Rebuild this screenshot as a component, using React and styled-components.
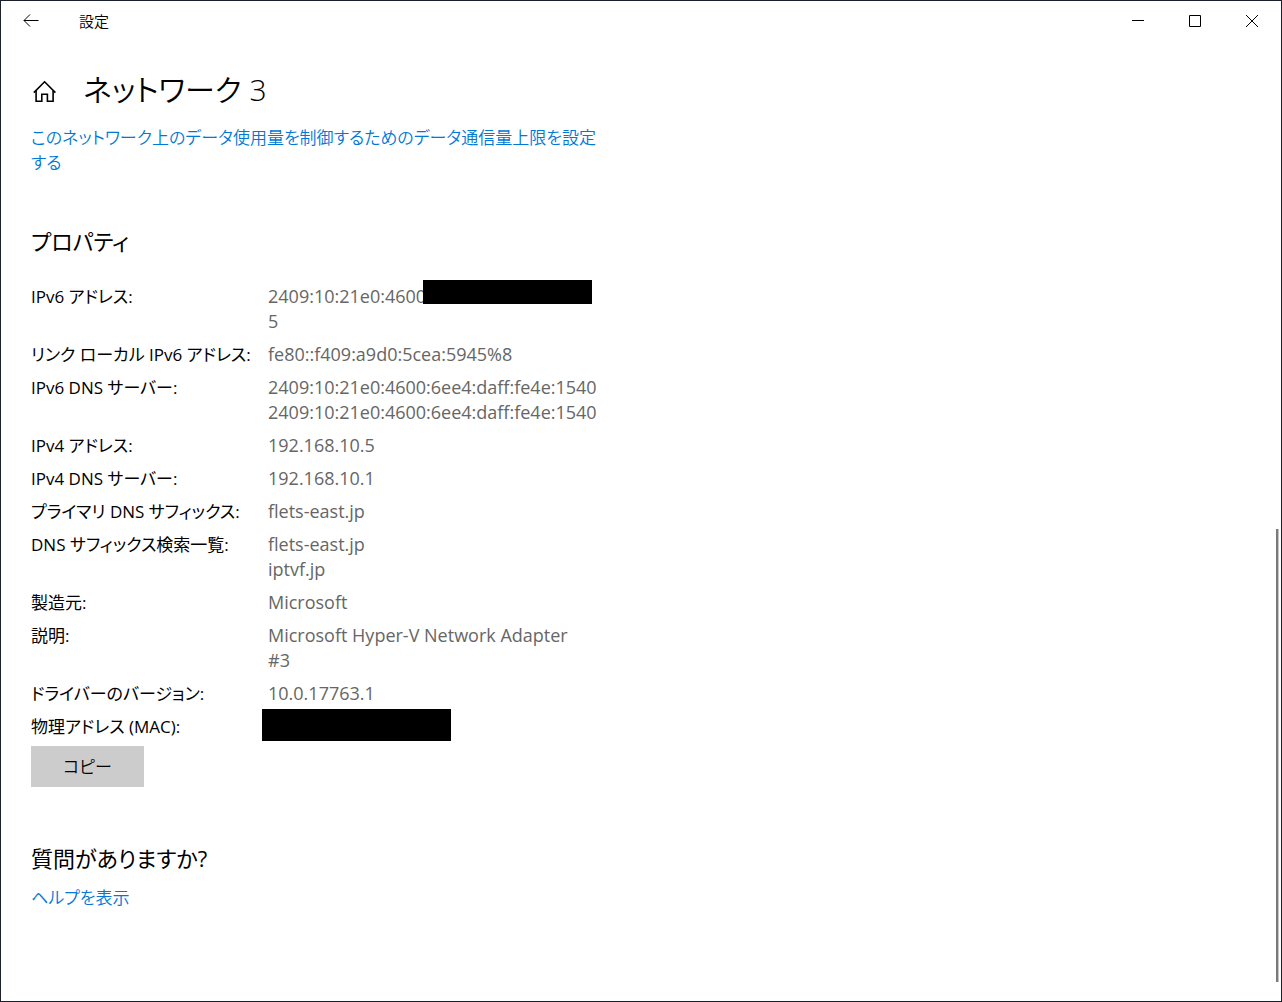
import React from 'react'
import styled, { createGlobalStyle } from 'styled-components'

const GlobalStyle = createGlobalStyle`
  * {
    box-sizing: border-box;
  }

  body {
    margin: 0;
    background: #fff;
    color: #000;
    font-family: 'Open Sans', 'Noto Sans CJK JP', sans-serif;
    font-size: 17px;
    font-weight: 350;
    line-height: 25px;
    font-feature-settings: 'palt';
  }
`

const Window = styled.div`
  position: relative;
  min-height: 100vh;
  border: 1px solid #1b202c;
  background: #fff;
`

const TitleBar = styled.header`
  display: flex;
  align-items: center;
  height: 40px;
  padding-right: 1px;
`

const TitleButton = styled.button`
  display: flex;
  align-items: center;
  justify-content: center;
  width: ${props => props.$width || 57}px;
  height: 40px;
  padding: 0;
  border: 0;
  background: transparent;
  color: #000;
`

const WindowTitle = styled.span`
  flex: 1;
  padding-left: 18px;
  font-size: 15px;
`

const Content = styled.main`
  max-width: 620px;
  padding: 23px 18px 80px 30px;
`

const PageHeader = styled.div`
  display: flex;
  align-items: center;
  gap: 26px;
  height: 54px;
  padding-left: 1px;
`

const PageTitle = styled.h1`
  margin: 0;
  padding-bottom: 2px;
  font-size: 30px;
  font-weight: 350;
  line-height: 48px;
`

const TextLink = styled.a`
  color: #0078d7;
  text-decoration: none;
`

const DataLimit = styled.p`
  margin: 7px 0 0;
`

const SectionTitle = styled.h2`
  margin: ${props => props.$top}px 0 0;
  font-size: 22px;
  font-weight: 400;
  line-height: 32px;
`

const PropertyTable = styled.table`
  width: 100%;
  margin-top: 23px;
  border-collapse: collapse;
  table-layout: fixed;
`

const Label = styled.th`
  width: 237px;
  padding: 4px 0;
  font-weight: 400;
  text-align: left;
  vertical-align: top;
  white-space: nowrap;
`

const Value = styled.td`
  position: relative;
  padding: 4px 0;
  color: #666;
  font-size: 18px;
  font-weight: 400;
  vertical-align: top;
`

const Line = styled.div`
  min-height: 25px;
`

const Mask = styled.span`
  position: absolute;
  top: ${props => props.$top}px;
  left: ${props => props.$left}px;
  width: ${props => props.$width}px;
  height: ${props => props.$height}px;
  background: #000;
`

const CopyButton = styled.button`
  width: 113px;
  height: 41px;
  margin-top: 3px;
  padding: 0;
  border: 0;
  background: #ccc;
  color: #000;
  font: inherit;
  font-feature-settings: 'palt';
`

const Help = styled.p`
  margin: 11px 0 0;
`

const ScrollThumb = styled.div`
  position: absolute;
  top: 528px;
  right: 2px;
  bottom: 19px;
  width: 3px;
  border-right: 1px solid #c4c4c4;
  background: #7a7a7a;
`

const properties = [
  {
    label: 'IPv6 アドレス:',
    lines: ['2409:10:21e0:4600:', '5'],
    mask: { $top: 0, $left: 155, $width: 169, $height: 24 }
  },
  { label: 'リンク ローカル IPv6 アドレス:', lines: ['fe80::f409:a9d0:5cea:5945%8'] },
  {
    label: 'IPv6 DNS サーバー:',
    lines: [
      '2409:10:21e0:4600:6ee4:daff:fe4e:1540',
      '2409:10:21e0:4600:6ee4:daff:fe4e:1540'
    ]
  },
  { label: 'IPv4 アドレス:', lines: ['192.168.10.5'] },
  { label: 'IPv4 DNS サーバー:', lines: ['192.168.10.1'] },
  { label: 'プライマリ DNS サフィックス:', lines: ['flets-east.jp'] },
  { label: 'DNS サフィックス検索一覧:', lines: ['flets-east.jp', 'iptvf.jp'] },
  { label: '製造元:', lines: ['Microsoft'] },
  { label: '説明:', lines: ['Microsoft Hyper-V Network Adapter', '#3'] },
  { label: 'ドライバーのバージョン:', lines: ['10.0.17763.1'] },
  {
    label: '物理アドレス (MAC):',
    lines: [''],
    mask: { $top: -1, $left: -6, $width: 189, $height: 32 }
  }
]

const BackIcon = () => (
  <svg width="16" height="14" viewBox="0 0 16 14" fill="none" stroke="currentColor">
    <path d="M15.5 6.5H1M7 0.5L1 6.5L7 12.5" />
  </svg>
)

const HomeIcon = () => (
  <svg width="25" height="24" viewBox="0 0 25 24" fill="none" stroke="currentColor" strokeWidth="1.6">
    <path d="M1.8 13.6L12.6 2.8L23.4 13.6" />
    <path d="M4.1 11.6V22.2H9.8V15.2H15.4V22.2H21.1V11.6" />
  </svg>
)

const App = () => {
  return (
    <>
      <GlobalStyle />
      <Window lang="ja">
        <TitleBar>
          <TitleButton $width={60} aria-label="戻る">
            <BackIcon />
          </TitleButton>
          <WindowTitle>設定</WindowTitle>
          <TitleButton aria-label="最小化">
            <svg width="12" height="12" viewBox="0 0 12 12" stroke="currentColor">
              <path d="M0 5.5H12" />
            </svg>
          </TitleButton>
          <TitleButton aria-label="最大化">
            <svg width="12" height="12" viewBox="0 0 12 12" fill="none" stroke="currentColor">
              <path d="M0.5 0.5H11.5V11.5H0.5Z" />
            </svg>
          </TitleButton>
          <TitleButton aria-label="閉じる">
            <svg width="12" height="12" viewBox="0 0 12 12" stroke="currentColor">
              <path d="M0 0L12 12M12 0L0 12" />
            </svg>
          </TitleButton>
        </TitleBar>

        <Content>
          <PageHeader>
            <HomeIcon />
            <PageTitle>ネットワーク 3</PageTitle>
          </PageHeader>
          <DataLimit>
            <TextLink href="#data-limit">
              このネットワーク上のデータ使用量を制御するためのデータ通信量上限を設定する
            </TextLink>
          </DataLimit>

          <SectionTitle $top={50}>プロパティ</SectionTitle>
          <PropertyTable>
            <tbody>
              {properties.map(({ label, lines, mask }) => (
                <tr key={label}>
                  <Label scope="row">{label}</Label>
                  <Value>
                    {lines.map((line, i) => (
                      <Line key={i}>{line}</Line>
                    ))}
                    {mask && <Mask {...mask} />}
                  </Value>
                </tr>
              ))}
            </tbody>
          </PropertyTable>
          <CopyButton type="button">コピー</CopyButton>

          <SectionTitle $top={55}>質問がありますか?</SectionTitle>
          <Help>
            <TextLink href="#help">ヘルプを表示</TextLink>
          </Help>
        </Content>
        <ScrollThumb />
      </Window>
    </>
  )
}

export default App
